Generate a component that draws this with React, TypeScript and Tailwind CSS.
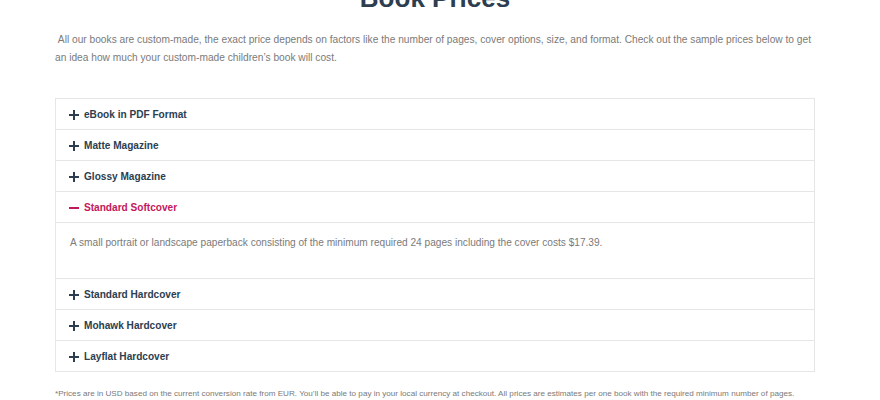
import React from "react";

const items = [
  { title: "eBook in PDF Format" },
  { title: "Matte Magazine" },
  { title: "Glossy Magazine" },
  {
    title: "Standard Softcover",
    open: true,
    body: "A small portrait or landscape paperback consisting of the minimum required 24 pages including the cover costs $17.39.",
  },
  { title: "Standard Hardcover" },
  { title: "Mohawk Hardcover" },
  { title: "Layflat Hardcover" },
];

function Plus() {
  return (
    <svg width="10" height="10" viewBox="0 0 10 10" className="shrink-0">
      <rect x="0" y="4" width="10" height="2" fill="#2c3e50" />
      <rect x="4" y="0" width="2" height="10" fill="#2c3e50" />
    </svg>
  );
}

function Minus() {
  return (
    <svg width="10" height="10" viewBox="0 0 10 10" className="shrink-0">
      <rect x="0" y="4" width="10" height="2" fill="#c2185b" />
    </svg>
  );
}

export default function App() {
  return (
    <div
      className="w-[880px] h-[400px] overflow-hidden bg-white px-[55px]"
      style={{ fontFamily: '"Liberation Sans", Arial, sans-serif' }}
    >
      <h1 className="mt-[-17px] w-[760px] text-center text-[26px] leading-[31px] font-bold text-[#2c3e50]">
        Book Prices
      </h1>
      <p className="mt-[17px] w-[760px] text-[10.2px] leading-[18px] text-[#7a7a7a]">
        {"\u00a0All our books are custom-made, the exact price depends on factors like the number of pages, cover options, size, and format. Check out the sample prices below to get an idea how much your custom-made children\u2019s book will cost."}
      </p>
      <div className="mt-[31px] w-[760px] border border-[#e6e6e6]">
        {items.map((it, i) => (
          <div key={i} className={i > 0 ? "border-t border-[#e6e6e6]" : ""}>
            <div className="flex h-[30px] items-center gap-[5px] pl-[13px] pt-[2px]">
              {it.open ? <Minus /> : <Plus />}
              <span
                className={
                  "text-[10.1px] font-bold " +
                  (it.open ? "text-[#c2185b]" : "text-[#2c3e50]")
                }
              >
                {it.title}
              </span>
            </div>
            {it.open && (
              <div className="h-[56px] border-t border-[#e6e6e6] pl-[14px] pt-[11px] text-[10.15px] leading-[18px] text-[#7a7a7a]">
                {it.body}
              </div>
            )}
          </div>
        ))}
      </div>
      <p className="mt-[16px] text-[8.12px] leading-[12px] text-[#7a7a7a]">
        *Prices are in USD based on the current conversion rate from EUR. You{"\u2019"}ll be able to pay in your local currency at checkout. All prices are estimates per one book with the required minimum number of pages.
      </p>
    </div>
  );
}
